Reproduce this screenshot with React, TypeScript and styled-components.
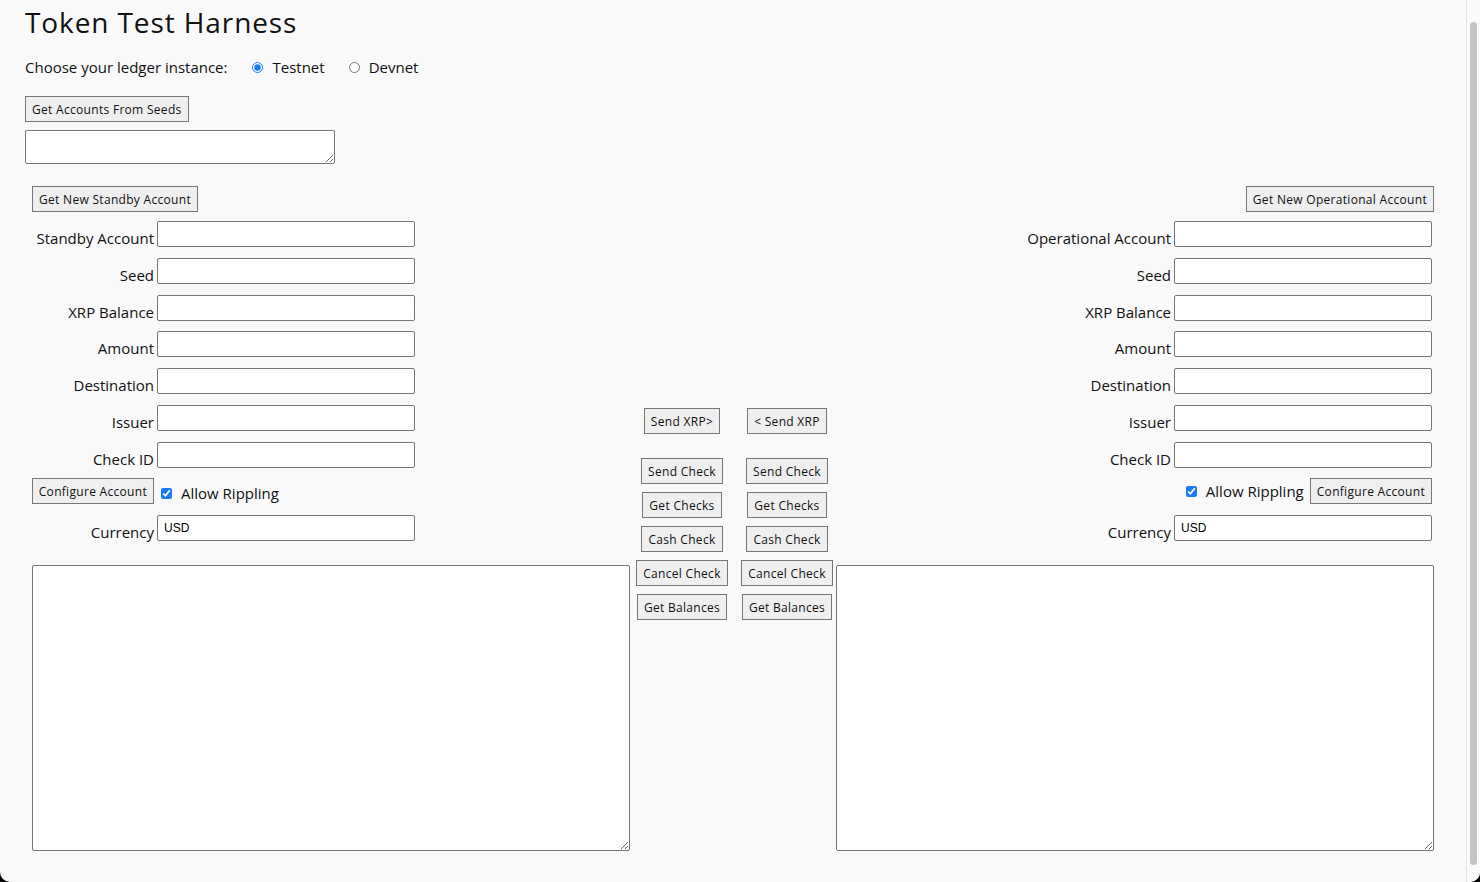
import React from "react";
import styled, { createGlobalStyle } from "styled-components";

const GlobalStyle = createGlobalStyle`
  html, body {
    margin: 0;
    padding: 0;
    background: #000;
  }
  body {
    font-family: "Open Sans", "Liberation Sans", sans-serif;
    color: #111;
  }
`;

const Shell = styled.div`
  display: flex;
  height: 882px;
  overflow: hidden;
  background: #f9f9f9;
  border-radius: 0 0 10px 10px;
`;

const Page = styled.main`
  flex: 1;
  padding-left: 25px;
`;

const Title = styled.h1`
  margin: 0;
  height: 44px;
  font-size: 28px;
  font-weight: 400;
  line-height: 44px;
  letter-spacing: 0.9px;
`;

const LedgerRow = styled.div`
  display: flex;
  align-items: center;
  margin-top: 12px;
  height: 22px;
  font-size: 15px;
`;

const RadioLabel = styled.label<{ $gap: number }>`
  display: flex;
  align-items: center;
  gap: 9px;
  margin-left: ${(p) => p.$gap}px;
  input {
    width: 11px;
    height: 11px;
    margin: 0;
    accent-color: #1a7cf5;
  }
`;

const Button = styled.button`
  height: 26px;
  padding: 0 6px;
  background: #efefef;
  border: 1px solid #767676;
  border-radius: 0;
  font-family: "Open Sans", "Liberation Sans", sans-serif;
  font-size: 12px;
  letter-spacing: 0.3px;
  color: #111;
  white-space: nowrap;
  cursor: pointer;
`;

const SeedsBlock = styled.div`
  display: flex;
  flex-direction: column;
  align-items: flex-start;
  gap: 8px;
  margin-top: 18px;
`;

const SeedsArea = styled.textarea`
  box-sizing: border-box;
  width: 310px;
  height: 34px;
  background: #fff;
  border: 1px solid #767676;
  border-radius: 2px;
`;

const Harness = styled.div`
  display: grid;
  grid-template-columns: 598px 206px 598px;
  margin: 22px 0 0 7px;
`;

const AccountColumn = styled.section<{ $side: "left" | "right" }>`
  display: flex;
  flex-direction: column;
  align-items: ${(p) => (p.$side === "left" ? "flex-start" : "flex-end")};
`;

const Fields = styled.div<{ $side: "left" | "right" }>`
  display: grid;
  grid-template-columns: ${(p) => (p.$side === "left" ? "122px" : "auto")} 258px;
  grid-auto-rows: 26px;
  column-gap: 3px;
  row-gap: 10.75px;
  margin-top: 9px;
  padding-right: ${(p) => (p.$side === "right" ? "2px" : "0")};
`;

const FieldLabel = styled.label`
  align-self: end;
  text-align: right;
  font-size: 15px;
  line-height: 18px;
  white-space: nowrap;
`;

const TextInput = styled.input`
  box-sizing: border-box;
  width: 258px;
  height: 26px;
  padding: 0 6px;
  background: #fff;
  border: 1px solid #767676;
  border-radius: 2px;
  font-family: "Liberation Sans", Arial, sans-serif;
  font-size: 12px;
  color: #000;
`;

const CellEnd = styled.div`
  display: flex;
  justify-content: flex-end;
`;

const RippleRow = styled.div<{ $span?: boolean }>`
  display: flex;
  align-items: center;
  justify-content: ${(p) => (p.$span ? "flex-end" : "flex-start")};
  grid-column: ${(p) => (p.$span ? "1 / -1" : "auto")};
  gap: 6px;
  font-size: 15px;
  padding-left: ${(p) => (p.$span ? "0" : "4px")};
  label {
    display: flex;
    align-items: center;
    gap: 9px;
    padding-top: ${(p) => (p.$span ? "0" : "4px")};
  }
  input {
    width: 11px;
    height: 11px;
    margin: 0;
    accent-color: #1a7cf5;
  }
`;

const ResultArea = styled.textarea`
  box-sizing: border-box;
  width: 598px;
  height: 286px;
  margin-top: 24px;
  background: #fff;
  border: 1px solid #767676;
  border-radius: 2px;
`;

const Middle = styled.div`
  display: grid;
  grid-template-columns: 92px 92px;
  column-gap: 13px;
  row-gap: 8px;
  justify-items: center;
  align-content: start;
  padding: 222px 3px 0 6px;
  > :nth-child(-n + 2) {
    margin-bottom: 16px;
  }
`;

const ScrollTrack = styled.div`
  display: flex;
  width: 14px;
  padding: 22px 3px 17px 3px;
  box-sizing: border-box;
  border-left: 1px solid #e4e4e4;
  background: #fafafa;
`;

const ScrollThumb = styled.div`
  flex: 1;
  background: #c2c2c2;
  border-radius: 4px;
`;

const fieldNames = ["Account", "Seed", "XRP Balance", "Amount", "Destination", "Issuer", "Check ID"];

const middleButtons: [string, string][] = [
  ["Send XRP>", "< Send XRP"],
  ["Send Check", "Send Check"],
  ["Get Checks", "Get Checks"],
  ["Cash Check", "Cash Check"],
  ["Cancel Check", "Cancel Check"],
  ["Get Balances", "Get Balances"],
];

const Account: React.FC<{ side: "left" | "right" }> = ({ side }) => {
  const name = side === "left" ? "Standby" : "Operational";
  const id = name.toLowerCase();

  return (
    <AccountColumn $side={side}>
      <Button type="button">Get New {name} Account</Button>
      <Fields $side={side}>
        {fieldNames.map((f) => (
          <React.Fragment key={f}>
            <FieldLabel htmlFor={`${id}-${f}`}>
              {f === "Account" ? `${name} Account` : f}
            </FieldLabel>
            <TextInput id={`${id}-${f}`} type="text" />
          </React.Fragment>
        ))}
        {side === "left" ? (
          <>
            <CellEnd>
              <Button type="button">Configure Account</Button>
            </CellEnd>
            <RippleRow>
              <label>
                <input type="checkbox" defaultChecked />
                Allow Rippling
              </label>
            </RippleRow>
          </>
        ) : (
          <RippleRow $span>
            <label>
              <input type="checkbox" defaultChecked />
              Allow Rippling
            </label>
            <Button type="button">Configure Account</Button>
          </RippleRow>
        )}
        <FieldLabel htmlFor={`${id}-currency`}>Currency</FieldLabel>
        <TextInput id={`${id}-currency`} type="text" defaultValue="USD" />
      </Fields>
      <ResultArea />
    </AccountColumn>
  );
};

const App: React.FC = () => {
  return (
    <>
      <GlobalStyle />
      <Shell>
        <Page>
          <Title>Token Test Harness</Title>
          <LedgerRow>
            Choose your ledger instance:
            <RadioLabel $gap={25}>
              <input type="radio" name="ledger" defaultChecked />
              Testnet
            </RadioLabel>
            <RadioLabel $gap={24}>
              <input type="radio" name="ledger" />
              Devnet
            </RadioLabel>
          </LedgerRow>
          <SeedsBlock>
            <Button type="button">Get Accounts From Seeds</Button>
            <SeedsArea />
          </SeedsBlock>
          <Harness>
            <Account side="left" />
            <Middle>
              {middleButtons.flat().map((b, i) => (
                <Button key={i} type="button">
                  {b}
                </Button>
              ))}
            </Middle>
            <Account side="right" />
          </Harness>
        </Page>
        <ScrollTrack>
          <ScrollThumb />
        </ScrollTrack>
      </Shell>
    </>
  );
};

export default App;
